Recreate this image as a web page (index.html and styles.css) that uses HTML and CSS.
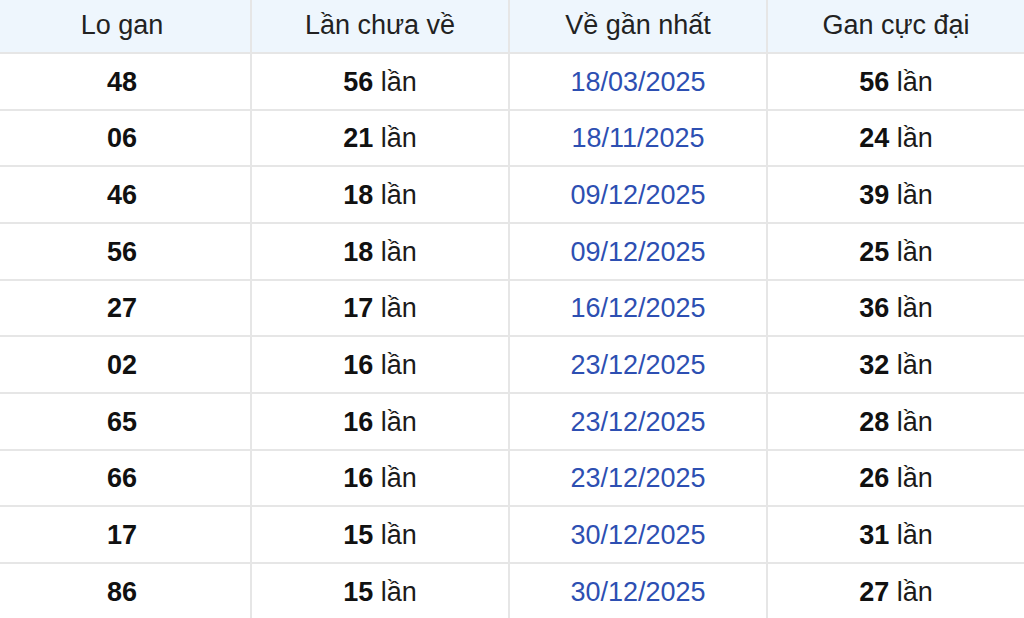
FILE: index.html
```html
<!DOCTYPE html>
<html lang="vi">
<head>
<meta charset="utf-8">
<title>Lo gan</title>
<link rel="stylesheet" href="styles.css">
</head>
<body>
<div class="table">
  <div class="row head">
    <div class="cell">Lo gan</div>
    <div class="cell">Lần chưa về</div>
    <div class="cell">Về gần nhất</div>
    <div class="cell">Gan cực đại</div>
  </div>
  <div class="row"><div class="cell"><b>48</b></div><div class="cell"><b>56</b>&nbsp;lần</div><div class="cell date">18/03/2025</div><div class="cell"><b>56</b>&nbsp;lần</div></div>
  <div class="row"><div class="cell"><b>06</b></div><div class="cell"><b>21</b>&nbsp;lần</div><div class="cell date">18/11/2025</div><div class="cell"><b>24</b>&nbsp;lần</div></div>
  <div class="row"><div class="cell"><b>46</b></div><div class="cell"><b>18</b>&nbsp;lần</div><div class="cell date">09/12/2025</div><div class="cell"><b>39</b>&nbsp;lần</div></div>
  <div class="row"><div class="cell"><b>56</b></div><div class="cell"><b>18</b>&nbsp;lần</div><div class="cell date">09/12/2025</div><div class="cell"><b>25</b>&nbsp;lần</div></div>
  <div class="row"><div class="cell"><b>27</b></div><div class="cell"><b>17</b>&nbsp;lần</div><div class="cell date">16/12/2025</div><div class="cell"><b>36</b>&nbsp;lần</div></div>
  <div class="row"><div class="cell"><b>02</b></div><div class="cell"><b>16</b>&nbsp;lần</div><div class="cell date">23/12/2025</div><div class="cell"><b>32</b>&nbsp;lần</div></div>
  <div class="row"><div class="cell"><b>65</b></div><div class="cell"><b>16</b>&nbsp;lần</div><div class="cell date">23/12/2025</div><div class="cell"><b>28</b>&nbsp;lần</div></div>
  <div class="row"><div class="cell"><b>66</b></div><div class="cell"><b>16</b>&nbsp;lần</div><div class="cell date">23/12/2025</div><div class="cell"><b>26</b>&nbsp;lần</div></div>
  <div class="row"><div class="cell"><b>17</b></div><div class="cell"><b>15</b>&nbsp;lần</div><div class="cell date">30/12/2025</div><div class="cell"><b>31</b>&nbsp;lần</div></div>
  <div class="row"><div class="cell"><b>86</b></div><div class="cell"><b>15</b>&nbsp;lần</div><div class="cell date">30/12/2025</div><div class="cell"><b>27</b>&nbsp;lần</div></div>
</div>
</body>
</html>
```
FILE: styles.css
```css
html, body {
  margin: 0;
  padding: 0;
  background: #ffffff;
  overflow: hidden;
}
body {
  font-family: "Liberation Sans", Arial, sans-serif;
  font-size: 27px;
  color: #1a1a1a;
}
.table {
  margin-top: -2.67px;
  margin-left: -6px;
  width: 1032px;
}
.row {
  display: grid;
  grid-template-columns: repeat(4, 258px);
}
.cell {
  box-sizing: border-box;
  height: 56.67px;
  padding-top: 2px;
  border-bottom: 2px solid #e6e6e6;
  border-right: 2px solid #e6e6e6;
  display: flex;
  align-items: center;
  justify-content: center;
  white-space: nowrap;
}
.head .cell {
  background: #eef6fd;
  color: #222222;
}
.cell b {
  font-weight: 700;
  color: #111111;
}
.date {
  color: #2d4fb2;
}
```
